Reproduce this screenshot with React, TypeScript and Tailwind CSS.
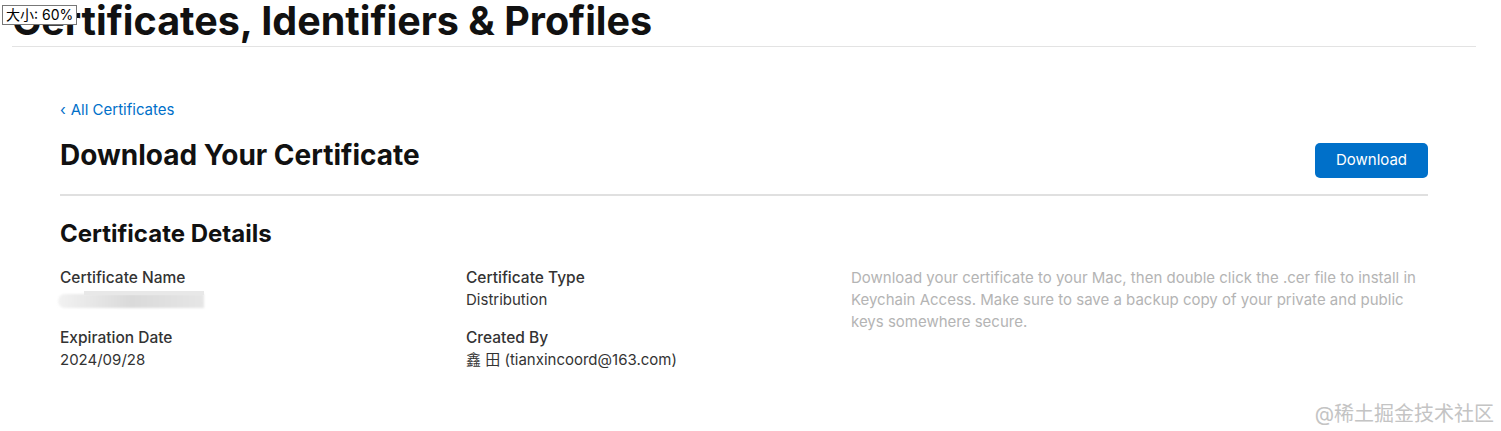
export default function App() {
  return (
    <div className="relative h-[431px] w-full overflow-hidden bg-white font-['Inter','Noto_Sans_CJK_SC',sans-serif] text-[#1d1d1f]">
      {/* page header */}
      <div className="mx-3 mr-[25px] border-b border-[#e3e3e3]">
        <h1 className="mt-[-4px] text-[39.5px] font-bold leading-[50px] text-[#111]">
          Certificates, Identifiers &amp; Profiles
        </h1>
      </div>

      {/* zoom badge */}
      <div className="absolute left-[2px] top-[5px] border border-[#777] bg-white px-[3px] text-[14px] leading-[18px] text-black">
        大小: 60%
      </div>

      <div className="mx-[60px] mr-[73px] pt-[53px]">
        <a className="flex items-center gap-[5px] text-[15px] leading-5 text-[#0070c9]">
          <span>‹</span>
          <span>All Certificates</span>
        </a>

        <div className="mt-[18px] flex items-start justify-between border-b-2 border-[#e0e0e0] pb-[16px]">
          <h2 className="mt-[-1px] text-[28px] font-bold leading-[36px] text-[#111]">
            Download Your Certificate
          </h2>
          <button className="mt-[5px] h-[35px] w-[113px] rounded-[5px] bg-[#0070c9] text-[15px] text-white">
            Download
          </button>
        </div>

        <h3 className="mt-[22px] text-[24px] font-bold leading-[32px] text-[#111]">Certificate Details</h3>

        <div className="mt-[17px] grid grid-cols-[406px_385px_1fr] text-[15px] leading-[22px]">
          <div className="flex flex-col gap-[16px]">
            <div>
              <div className="text-[15.5px] font-medium text-[#333]">Certificate Name</div>
              <div className="relative h-[22px]">
                <div className="absolute left-[-2px] top-[5px] h-[14px] w-[146px] rounded-l-full bg-gradient-to-r from-[#f2f2f2] via-[#dadada] to-[#e6e6e6] blur-[1px]" />
                <div className="absolute left-[24px] top-[2px] h-[4px] w-[120px] bg-[#e8e8e8]" />
              </div>
            </div>
            <div>
              <div className="text-[15.5px] font-medium text-[#333]">Expiration Date</div>
              <div className="text-[#333]">2024/09/28</div>
            </div>
          </div>

          <div className="flex flex-col gap-[16px]">
            <div>
              <div className="text-[15.5px] font-medium text-[#333]">Certificate Type</div>
              <div className="text-[#333]">Distribution</div>
            </div>
            <div>
              <div className="text-[15.5px] font-medium text-[#333]">Created By</div>
              <div className="text-[#333]">鑫 田 (tianxincoord@163.com)</div>
            </div>
          </div>

          <p className="text-[#b4b4b4]">
            Download your certificate to your Mac, then double click the .cer file to install in Keychain Access. Make sure to save a backup copy of your private and public keys somewhere secure.
          </p>
        </div>
      </div>

      {/* watermark */}
      <div className="absolute bottom-[5px] right-[7px] text-[20px] leading-6 text-[#c4c4c4]">
        @稀土掘金技术社区
      </div>
    </div>
  );
}
